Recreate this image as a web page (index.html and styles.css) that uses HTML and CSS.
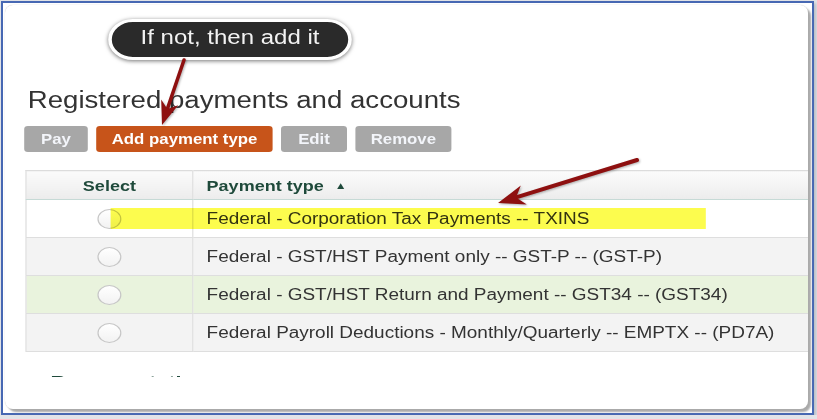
FILE: index.html
```html
<!DOCTYPE html>
<html>
<head>
    <title>Registered payments and accounts</title>
    <link rel="stylesheet" href="styles.css">
</head>
<body>
    <div class="frame">
        <div class="card">
            <div class="viewport">
                <div class="sheet">
                    <div class="callout">If not, then add it</div>

                    <h1>Registered payments and accounts</h1>

                    <div class="toolbar">
                        <button class="btn btn-short">Pay</button>
                        <button class="btn btn-primary">Add payment type</button>
                        <button class="btn btn-short">Edit</button>
                        <button class="btn">Remove</button>
                    </div>

                    <table class="payments">
                        <thead>
                            <tr>
                                <th class="col-select">Select</th>
                                <th class="col-type">Payment type <span class="sort">&#9650;</span></th>
                            </tr>
                        </thead>
                        <tbody>
                            <tr>
                                <td class="col-select"><input type="radio" name="ptype"></td>
                                <td class="col-type">Federal - Corporation Tax Payments -- TXINS</td>
                            </tr>
                            <tr class="alt">
                                <td class="col-select"><input type="radio" name="ptype"></td>
                                <td class="col-type">Federal - GST/HST Payment only -- GST-P -- (GST-P)</td>
                            </tr>
                            <tr class="hover">
                                <td class="col-select"><input type="radio" name="ptype"></td>
                                <td class="col-type">Federal - GST/HST Return and Payment -- GST34 -- (GST34)</td>
                            </tr>
                            <tr class="alt">
                                <td class="col-select"><input type="radio" name="ptype"></td>
                                <td class="col-type">Federal Payroll Deductions - Monthly/Quarterly -- EMPTX -- (PD7A)</td>
                            </tr>
                        </tbody>
                    </table>

                    <!-- marker over the first row -->
                    <span class="highlight"></span>

                    <h2>Representatives</h2>
                </div>
            </div>

            <!-- annotation arrows -->
            <svg class="arrows" width="803" height="404" viewBox="0 0 803 404">
                <line x1="179" y1="55" x2="162.4" y2="103.9" stroke="#8e1010" stroke-width="3.5" stroke-linecap="round"/>
                <polygon points="157,120 173.2,100.2 162.4,103.9 156.2,94.4" fill="#8e1010"/>
                <line x1="632" y1="155" x2="511.1" y2="192.4" stroke="#8e1010" stroke-width="4" stroke-linecap="round"/>
                <polygon points="493,198 521.8,199.6 511.1,192.4 515.8,180.5" fill="#8e1010"/>
            </svg>
        </div>
    </div>
</body>
</html>
```

FILE: styles.css
```css
body {
    margin: 0;
    background-color: #e2e4e8;
    font-family: "Liberation Sans", Arial, sans-serif;
}
.frame {
    box-sizing: border-box;
    width: 813px;
    height: 414px;
    margin: 1px 0 0 1px;
    padding: 2px 0 0 2px;
    border: 2px solid #4768b3;
    background-color: #fff;
    box-shadow: 2px 2px 3px #b9bcc4;
}
.card {
    position: relative;
    width: 803px;
    height: 404px;
    border-radius: 8px;
    background-color: #fff;
    box-shadow: 0 0 1px #bbb, 3px 3px 2px #a9a9a9;
    overflow: hidden;
}
.viewport {
    height: 372px;
    overflow: hidden;
}
/* the capture is stretched sideways, so the page is drawn 1.2x wide */
.sheet {
    position: relative;
    width: 680px;
    padding: 82px 0 0 17px;
    transform: scaleX(1.2);
    transform-origin: 0 0;
}
h1 {
    margin: 0;
    padding-left: 2px;
    font-size: 23px;
    font-weight: normal;
    line-height: 26px;
    color: #333;
}
.toolbar {
    display: flex;
    gap: 7px;
    margin: 13px 0 0 -1px;
}
.btn {
    height: 26px;
    padding: 0 13px;
    border: none;
    border-radius: 3px;
    background-color: #a7a7a7;
    color: #f3f5fa;
    font: bold 14px "Liberation Sans", Arial, sans-serif;
}
.btn-short {
    padding: 0 14px;
}
.btn-primary {
    background-color: #c7541a;
    color: #fff;
}
.payments {
    width: 680px;
    margin-top: 18px;
    border-collapse: collapse;
    border-top: 1px solid #dcdcdc;
    border-left: 1px solid #dcdcdc;
    font-size: 15.8px;
    color: #333;
}
.payments th {
    height: 28px;
    padding: 0;
    font-size: 15px;
    font-weight: bold;
    color: #1f4a3b;
    text-align: left;
    background: linear-gradient(#fbfbfb, #ececec);
    border-bottom: 1px solid #c6dad6;
}
.payments td {
    height: 37px;
    padding: 0;
    border-bottom: 1px solid #dedede;
}
.payments .col-select {
    width: 138px;
    text-align: center;
    border-right: 1px solid #dedede;
}
.payments .col-type {
    padding-left: 11px;
}
.payments tr.alt td {
    background-color: #f3f3f3;
}
.payments tr.hover td {
    background-color: #e9f3dd;
}
.sort {
    font-size: 10px;
    vertical-align: 2px;
    margin-left: 5px;
}
input[type="radio"] {
    appearance: none;
    display: block;
    width: 20px;
    height: 20px;
    margin: 0 auto;
    border: 1px solid #c6c6c6;
    border-radius: 50%;
    background: linear-gradient(#fff, #f2f2f2);
}
h2 {
    margin: 20px 0 0 21px;
    font-size: 18px;
    line-height: 22px;
    color: #1f4a3b;
}
.callout {
    position: absolute;
    left: 86px;
    top: 14px;
    height: 30px;
    padding: 0 24px 5px;
    line-height: 30px;
    border: 3px solid #fff;
    border-radius: 22px;
    background-color: #2a2a2a;
    color: #f2f2f2;
    font-size: 20px;
    white-space: nowrap;
    box-shadow: 0 1px 4px rgba(0,0,0,0.55);
}
.highlight {
    position: absolute;
    left: 88px;
    top: 203px;
    width: 496px;
    height: 21px;
    background-color: #fcfc4e;
    mix-blend-mode: multiply;
}
.arrows {
    position: absolute;
    left: 0;
    top: 0;
    pointer-events: none;
    filter: drop-shadow(1px 1px 1px rgba(0,0,0,0.3));
}
```
